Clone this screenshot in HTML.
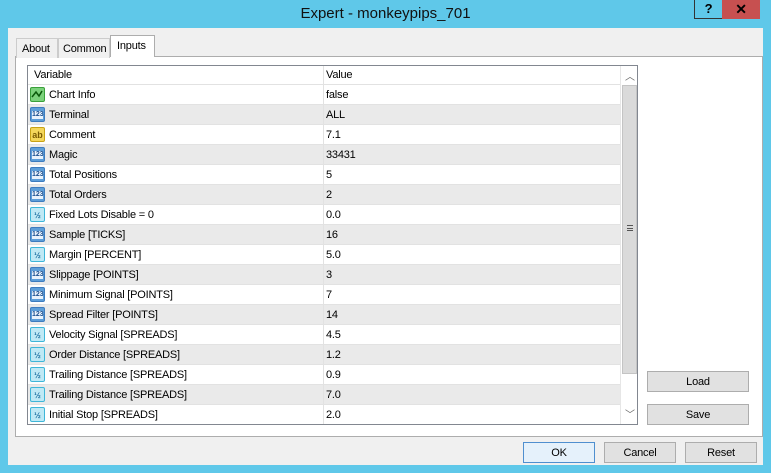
<!DOCTYPE html>
<html><head><style>
*{margin:0;padding:0;box-sizing:border-box}
body{width:771px;height:473px;background:#5fc8e9;font-family:"Liberation Sans",sans-serif;font-size:11px;letter-spacing:-0.2px;color:#000;position:relative;overflow:hidden}
.title{position:absolute;left:0;top:0;width:771px;height:28px;text-align:center;line-height:28px;font-size:15px;letter-spacing:0;color:#111}
.hb{position:absolute;left:694px;top:0;width:28px;height:19px;border:1px solid #333;border-top:none;border-right:none;text-align:center;font-weight:bold;font-size:13px;line-height:18px}
.xb{position:absolute;left:722px;top:0;width:38px;height:19px;background:#c75050;text-align:center;font-weight:bold;font-size:14px;line-height:18px}
.client{position:absolute;left:8px;top:28px;width:755px;height:437px;background:#f0f0f0}
.tab{position:absolute;top:37px;height:20px;border:1px solid #ccc;border-bottom:none;background:#f0f0f0;line-height:20px;padding-left:5px}
.panel{position:absolute;left:15px;top:56px;width:748px;height:381px;background:#fff;border:1px solid #adadad}
.tbl{position:absolute;left:27px;top:65px;width:611px;height:360px;border:1px solid #828790;background:#fff;overflow:hidden}
.row{position:absolute;left:0;width:593px;height:20px;border-bottom:1px solid #e2e2e2;line-height:21px}
.row.g{background:#eaeaea}
.c1{position:absolute;left:21px}
.c2{position:absolute;left:298px}
.sep{position:absolute;left:295px;top:0;width:1px;height:360px;background:#e2e2e2}
.ic{position:absolute;left:2px;top:2px;width:15px;height:15px;border-radius:2px;font-size:7px;font-weight:bold;line-height:15px;text-align:center;color:#1b4a8a;letter-spacing:0}
.i123{background:#5d9ed8;border:1px solid #3d7cbf;color:#fff}
.i123 span{display:block;background:#e9f3fc;color:#1a4f8f;margin:3px 1px;line-height:8px;font-size:7px}
.iv{background:#bfe9f5;border:1px solid #3fb6d8;color:#1a6fa0;font-size:8px}
.iab{background:#f4d65a;border:1px solid #c8a215;color:#7a5a00;font-size:9px}
.ich{background:#7bd27b;border:1px solid #3aa03a}
.sb{position:absolute;left:592px;top:0;width:17px;height:358px;background:#fff;border-left:1px solid #e6e6e6}
.thumb{position:absolute;left:1px;top:19px;width:15px;height:289px;background:#dadada;border:1px solid #c4c4c4}
.btn{position:absolute;height:21px;background:#e1e1e1;border:1px solid #adadad;text-align:center;line-height:20px}
</style></head><body>
<div class="title">Expert - monkeypips_701</div>
<div class="hb">?</div><div class="xb">✕</div>
<div class="client"></div>
<div class="panel"></div>
<div class="tab" style="left:16px;width:42px;top:38px">About</div>
<div class="tab" style="left:58px;width:52px;top:38px;padding-left:4px">Common</div>
<div class="tab" style="left:110px;width:45px;top:35px;height:22px;background:#fff;border-color:#adadad;line-height:20px;padding-left:6px">Inputs</div>
<div class="tbl">
<div class="row" style="top:0;height:19px;line-height:19px"><span class="c1" style="left:6px">Variable</span><span class="c2">Value</span></div>
<div class="row" style="top:19px"><div class="ic ich"><svg width="13" height="13"><path d="M1 9 L5 4 L8 8 L11 3" stroke="#0a5a0a" fill="none" stroke-width="1.5"/></svg></div><span class="c1">Chart Info</span><span class="c2">false</span></div>
<div class="row g" style="top:39px"><div class="ic i123"><span>123</span></div><span class="c1">Terminal</span><span class="c2">ALL</span></div>
<div class="row" style="top:59px"><div class="ic iab">ab</div><span class="c1">Comment</span><span class="c2">7.1</span></div>
<div class="row g" style="top:79px"><div class="ic i123"><span>123</span></div><span class="c1">Magic</span><span class="c2">33431</span></div>
<div class="row" style="top:99px"><div class="ic i123"><span>123</span></div><span class="c1">Total Positions</span><span class="c2">5</span></div>
<div class="row g" style="top:119px"><div class="ic i123"><span>123</span></div><span class="c1">Total Orders</span><span class="c2">2</span></div>
<div class="row" style="top:139px"><div class="ic iv">½</div><span class="c1">Fixed Lots Disable = 0</span><span class="c2">0.0</span></div>
<div class="row g" style="top:159px"><div class="ic i123"><span>123</span></div><span class="c1">Sample [TICKS]</span><span class="c2">16</span></div>
<div class="row" style="top:179px"><div class="ic iv">½</div><span class="c1">Margin [PERCENT]</span><span class="c2">5.0</span></div>
<div class="row g" style="top:199px"><div class="ic i123"><span>123</span></div><span class="c1">Slippage [POINTS]</span><span class="c2">3</span></div>
<div class="row" style="top:219px"><div class="ic i123"><span>123</span></div><span class="c1">Minimum Signal [POINTS]</span><span class="c2">7</span></div>
<div class="row g" style="top:239px"><div class="ic i123"><span>123</span></div><span class="c1">Spread Filter [POINTS]</span><span class="c2">14</span></div>
<div class="row" style="top:259px"><div class="ic iv">½</div><span class="c1">Velocity Signal [SPREADS]</span><span class="c2">4.5</span></div>
<div class="row g" style="top:279px"><div class="ic iv">½</div><span class="c1">Order Distance [SPREADS]</span><span class="c2">1.2</span></div>
<div class="row" style="top:299px"><div class="ic iv">½</div><span class="c1">Trailing Distance [SPREADS]</span><span class="c2">0.9</span></div>
<div class="row g" style="top:319px"><div class="ic iv">½</div><span class="c1">Trailing Distance [SPREADS]</span><span class="c2">7.0</span></div>
<div class="row" style="top:339px"><div class="ic iv">½</div><span class="c1">Initial Stop [SPREADS]</span><span class="c2">2.0</span></div>
<div class="sep"></div>
<div class="sb"><div style="position:absolute;top:2px;left:4px;font-size:10px;color:#666">︿</div><div class="thumb"><div style="position:absolute;left:4px;top:139px;width:6px;height:6px;border-top:1px solid #555;border-bottom:1px solid #555"><div style="margin-top:2px;border-top:1px solid #555"></div></div></div><div style="position:absolute;top:340px;left:4px;font-size:10px;color:#666">﹀</div></div>
</div>
<div class="btn" style="left:647px;top:371px;width:102px">Load</div>
<div class="btn" style="left:647px;top:404px;width:102px">Save</div>
<div class="btn" style="left:523px;top:442px;width:72px;border-color:#4f8fcf;background:#e5f1fb">OK</div>
<div class="btn" style="left:604px;top:442px;width:72px">Cancel</div>
<div class="btn" style="left:685px;top:442px;width:72px">Reset</div>
</body></html>
